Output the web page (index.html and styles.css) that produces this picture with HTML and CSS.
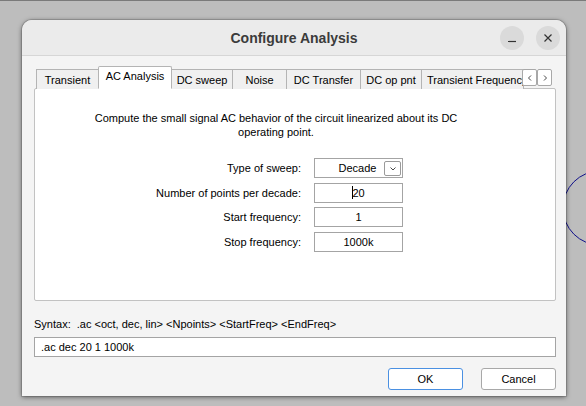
FILE: index.html
```html
<!DOCTYPE html>
<html>
<head>
<meta charset="utf-8">
<link rel="stylesheet" href="styles.css">
</head>
<body>
<div class="desktop">
  <svg class="bg-circle" width="80" height="90" viewBox="0 0 80 90"><circle cx="40" cy="42" r="37" fill="none" stroke="#10108a" stroke-width="1"/></svg>
  <div class="window">
    <header class="titlebar">
      <div></div>
      <h1 class="title">Configure Analysis</h1>
      <div class="wm-buttons">
        <span class="wm-btn"><svg width="24" height="24" viewBox="0 0 24 24"><path d="M8 15.5h8" stroke="#333" stroke-width="1.2"/></svg></span>
        <span class="wm-btn"><svg width="24" height="24" viewBox="0 0 24 24"><path d="M8.5 8.5l7 7M15.5 8.5l-7 7" stroke="#333" stroke-width="1.2"/></svg></span>
      </div>
    </header>
    <div class="dialog">
      <div class="tabs">
        <div class="tab t1">Transient</div>
        <div class="tab t2 active">AC Analysis</div>
        <div class="tab t3">DC sweep</div>
        <div class="tab t4">Noise</div>
        <div class="tab t5">DC Transfer</div>
        <div class="tab t6">DC op pnt</div>
        <div class="tab t7">Transient Frequency Response</div>
        <div class="tab-scroll">
          <span class="scroll-btn"><svg width="6" height="8" viewBox="0 0 6 8"><path d="M4 1.5L1.5 4L4 6.5" fill="none" stroke="#333" stroke-width="0.9"/></svg></span>
          <span class="scroll-btn"><svg width="6" height="8" viewBox="0 0 6 8"><path d="M2 1.5L4.5 4L2 6.5" fill="none" stroke="#333" stroke-width="0.9"/></svg></span>
        </div>
      </div>
      <div class="panel">
        <p class="desc">Compute the small signal AC behavior of the circuit linearized about its DC operating point.</p>
        <div class="form">
          <label class="lbl">Type of sweep:</label>
          <div class="field combo">Decade<span class="drop"><svg width="8" height="6" viewBox="0 0 8 6"><path d="M1.5 1.5L4 4L6.5 1.5" fill="none" stroke="#333" stroke-width="0.9"/></svg></span></div>
          <label class="lbl">Number of points per decade:</label>
          <div class="field"><span class="caret"></span>20</div>
          <label class="lbl">Start frequency:</label>
          <div class="field">1</div>
          <label class="lbl">Stop frequency:</label>
          <div class="field">1000k</div>
        </div>
      </div>
      <div class="syntax">Syntax:&nbsp; .ac &lt;oct, dec, lin&gt; &lt;Npoints&gt; &lt;StartFreq&gt; &lt;EndFreq&gt;</div>
      <div class="cmd">.ac dec 20 1 1000k</div>
      <div class="actions">
        <button class="btn primary">OK</button>
        <button class="btn">Cancel</button>
      </div>
    </div>
  </div>
</div>
</body>
</html>
```
FILE: styles.css
```css
* { box-sizing: border-box; }
html, body { margin: 0; padding: 0; }
body { background: #bdbdbd; font-family: "Liberation Sans", Arial, sans-serif; font-size: 11px; color: #000; }
.desktop {
  position: relative;
  width: 586px; height: 406px;
  overflow: hidden;
  border-top: 1px solid #7a7a7a;
  padding: 19px 0 0 22px;
}
.bg-circle { position: absolute; left: 560px; top: 165px; }
.window {
  position: relative;
  width: 544px; height: 376px;
  background: #f4f4f4;
  border-radius: 10px 10px 0 0;
  box-shadow: 0 1px 5px rgba(0,0,0,0.55), 0 0 0 1px rgba(0,0,0,0.12);
  display: flex; flex-direction: column;
}
.titlebar {
  height: 36px;
  background: #ebebeb;
  border-radius: 10px 10px 0 0;
  border-bottom: 1px solid #d6d6d6;
  display: grid;
  grid-template-columns: 1fr auto 1fr;
  align-items: center;
}
.title {
  margin: 0;
  font-family: "Liberation Sans", Arial, sans-serif;
  font-weight: bold;
  font-size: 14px;
  color: #3b3b3b;
}
.wm-buttons { display: flex; justify-content: flex-end; gap: 12px; padding-right: 6px; }
.wm-btn {
  width: 24px; height: 24px; border-radius: 50%;
  background: #dadada;
  display: flex;
}
.dialog {
  flex: 1;
  display: flex; flex-direction: column;
  padding: 11px 10px 0 12px;
}
.tabs {
  display: flex; align-items: flex-end;
  height: 22px;
  padding-left: 2px;
  position: relative; z-index: 1;
  margin-bottom: -1px;
}
.tab {
  height: 20px;
  background: #f0f0f0;
  border: 1px solid #b4b4b4;
  border-bottom: none;
  margin-left: -1px;
  white-space: nowrap; overflow: hidden;
  display: flex; align-items: center; justify-content: center;
  font-size: 11px;
}
.tab.t1 { margin-left: 0; width: 63px; }
.tab.t2 { width: 74px; }
.tab.t3 { width: 62px; }
.tab.t4 { width: 55px; }
.tab.t5 { width: 75px; }
.tab.t6 { width: 62px; }
.tab.t7 { width: 103px; justify-content: flex-start; padding-left: 5px; }
.tab.active {
  height: 23px;
  background: #fff;
  border-bottom: 1px solid #fff;
  border-radius: 2px 2px 0 0;
  align-items: flex-start; padding-top: 3px;
  position: relative; z-index: 2;
}
.tab-scroll {
  display: flex; gap: 0;
  margin-left: -2px;
  align-self: flex-start;
  padding-top: 2px;
  position: relative; z-index: 3;
}
.scroll-btn {
  width: 15px; height: 17px;
  background: #fff;
  border: 1px solid #a8a8a8;
  border-radius: 2px;
  display: flex; align-items: center; justify-content: center;
}
.panel {
  height: 213px;
  background: #fff;
  border: 1px solid #c2c2c2;
  border-radius: 2px;
}
.desc {
  width: 382px;
  margin: 22px 0 0 50px;
  text-align: center;
  line-height: 14px;
}
.form {
  display: grid;
  grid-template-columns: 266px 89px;
  column-gap: 13px;
  row-gap: 4.6px;
  margin-top: 19px;
}
.lbl { text-align: right; line-height: 20px; height: 20px; }
.field {
  position: relative;
  height: 20px;
  border: 1px solid #a4a4a4;
  background: #fff;
  display: flex; align-items: center; justify-content: center;
  line-height: 18px;
}
.combo { padding-right: 2px; }
.drop {
  position: absolute; right: 1px; top: 2px;
  width: 17px; height: 15px;
  border: 1px solid #9a9a9a;
  border-radius: 2px;
  background: #fff;
  display: flex; align-items: center; justify-content: center;
}
.caret { width: 1px; height: 13px; background: #000; margin-right: -1px; }
.syntax { margin-top: 17px; line-height: 13px; }
.cmd {
  margin-top: 6px;
  height: 20px;
  background: #fff;
  border: 1px solid #a4a4a4;
  line-height: 18px;
  padding-left: 6px;
}
.actions {
  display: flex; justify-content: flex-end; gap: 18px;
  margin-top: 11px;
}
.btn {
  width: 75px; height: 22px;
  font-family: "Liberation Sans", Arial, sans-serif;
  font-size: 11px;
  background: #fff;
  border: 1px solid #a8a8a8;
  border-radius: 3px;
  color: #000;
  padding: 0;
}
.btn.primary { border-color: #4a90e2; }
```
